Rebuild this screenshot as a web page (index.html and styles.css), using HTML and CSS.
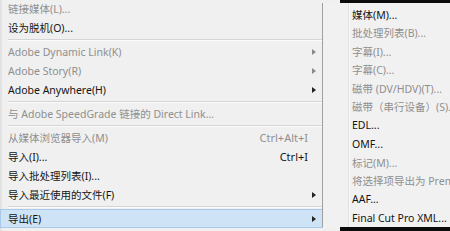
FILE: index.html
```html
<!DOCTYPE html>
<html lang="zh-CN">
<head>
<meta charset="utf-8">
<link rel="stylesheet" href="styles.css">
</head>
<body>
<div class="screen">
  <div class="menu">
    <div class="item dis first">链接媒体(L)...</div>
    <div class="item">设为脱机(O)...</div>
    <div class="sep"></div>
    <div class="item dis"><span>Adobe Dynamic Link(K)</span><span class="arrow dim"></span></div>
    <div class="item dis"><span>Adobe Story(R)</span><span class="arrow dim"></span></div>
    <div class="item"><span>Adobe Anywhere(H)</span><span class="arrow"></span></div>
    <div class="sep"></div>
    <div class="item dis">与 Adobe SpeedGrade 链接的 Direct Link...</div>
    <div class="sep"></div>
    <div class="item dis"><span>从媒体浏览器导入(M)</span><span class="key">Ctrl+Alt+I</span></div>
    <div class="item"><span>导入(I)...</span><span class="key">Ctrl+I</span></div>
    <div class="item">导入批处理列表(I)...</div>
    <div class="item"><span>导入最近使用的文件(F)</span><span class="arrow"></span></div>
    <div class="sep"></div>
    <div class="item hl"><span>导出(E)</span><span class="arrow"></span></div>
  </div>
  <div class="submenu">
    <div class="sitem">媒体(M)...</div>
    <div class="sitem dis">批处理列表(B)...</div>
    <div class="sitem dis">字幕(I)...</div>
    <div class="sitem dis">字幕(C)...</div>
    <div class="sitem dis">磁带 (DV/HDV)(T)...</div>
    <div class="sitem dis">磁带（串行设备）(S)...</div>
    <div class="sitem">EDL...</div>
    <div class="sitem">OMF...</div>
    <div class="sitem dis">标记(M)...</div>
    <div class="sitem dis">将选择项导出为 Premiere 项目...</div>
    <div class="sitem">AAF...</div>
    <div class="sitem">Final Cut Pro XML...</div>
  </div>
</div>
</body>
</html>
```
FILE: styles.css
```css
html, body {
  margin: 0;
  padding: 0;
  background: #0b0b0b;
  overflow: hidden;
}
.screen {
  position: relative;
  width: 450px;
  height: 231px;
  overflow: hidden;
  font-family: "Noto Sans", "Noto Sans CJK SC", sans-serif;
  font-size: 10.5px;
  color: #151515;
}
.menu {
  width: 340px;
  height: 240px;
  background: #f0f0f0;
  border-left: 2px solid #e2e2e2;
  box-sizing: border-box;
  display: flex;
  flex-direction: column;
  margin-top: -1px;
}
.item {
  height: 19px;
  flex: none;
  display: flex;
  align-items: center;
  justify-content: space-between;
  padding: 0 0 0 6px;
  width: 320px;
  box-sizing: border-box;
  white-space: nowrap;
}
.dis { color: #8f8f8f; }
.sep {
  height: 5px;
  flex: none;
  display: flex;
  align-items: center;
  padding-left: 6px;
}
.sep::before {
  content: "";
  display: block;
  width: 100%;
  height: 1px;
  background: #d5d5d5;
  border-bottom: 1px solid #fbfbfb;
}
.key {
  margin-right: 14px;
  font-size: 11px;
}
.arrow {
  width: 0;
  height: 0;
  border-top: 3px solid transparent;
  border-bottom: 3px solid transparent;
  border-left: 4px solid #222;
  margin-right: 6px;
}
.arrow.dim { border-left-color: #8a8a8a; }
.hl {
  background: #cfe3f6;
  border: 1px solid #a9c9ea;
  height: 19px;
  width: 323px;
  margin-left: -2px;
  padding-left: 7px;
}
.submenu {
  position: absolute;
  left: 322px;
  top: 3px;
  width: 140px;
  height: 224px;
  background: #f1f1f1;
  border-left: 1px solid #a0a0a0;
  box-sizing: border-box;
  padding-top: 2px;
}
.submenu::before {
  content: "";
  position: absolute;
  left: 25px;
  top: 0;
  bottom: 0;
  width: 1px;
  background: #e0e0e0;
  border-right: 1px solid #fafafa;
}
.sitem {
  height: 18.5px;
  display: flex;
  align-items: center;
  padding-left: 29px;
  white-space: nowrap;
  position: relative;
}
```
